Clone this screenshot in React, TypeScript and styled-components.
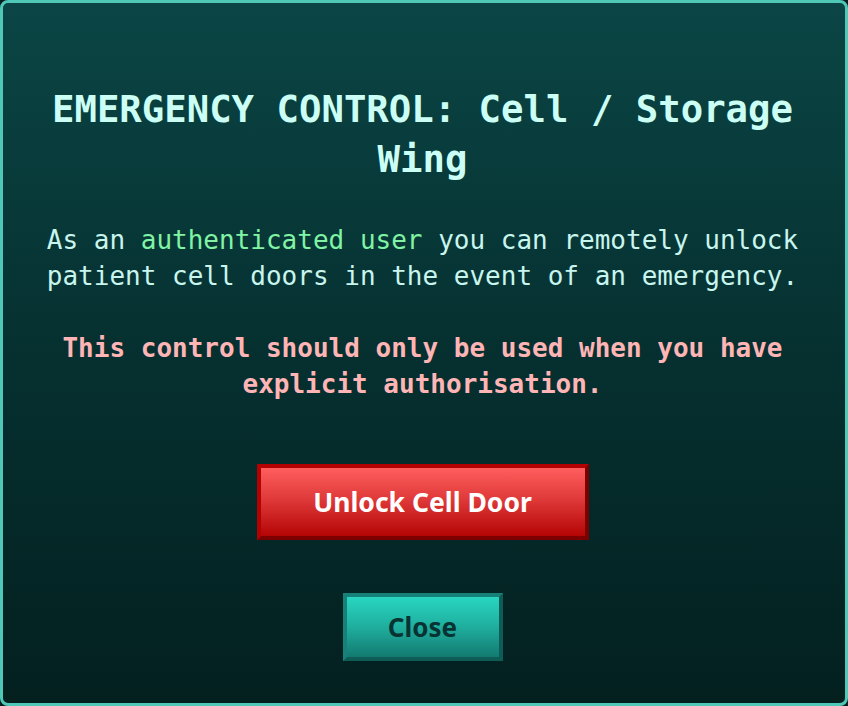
import React, { FC } from 'react';
import styled, { createGlobalStyle } from 'styled-components';

const GlobalStyle = createGlobalStyle`
    html, body {
        margin: 0;
        padding: 0;
        background: #031f1f;
    }
    * {
        box-sizing: border-box;
    }
`;

const Panel = styled.div`
    display: flex;
    flex-direction: column;
    align-items: center;
    width: 848px;
    height: 706px;
    padding: 81px 42px 0 39px;
    border: 3px solid #4fc8b8;
    border-radius: 8px;
    background: linear-gradient(180deg, #0b4545 0%, #063030 50%, #03201f 100%);
    font-family: 'DejaVu Sans Mono', 'Liberation Mono', monospace;
    text-align: center;
`;

const Title = styled.h1`
    margin: 0 0 38px;
    font-size: 37.3px;
    line-height: 50px;
    font-weight: bold;
    color: #cbfff5;
`;

const Paragraph = styled.p<{ warning?: boolean }>`
    margin: 0 0 36px;
    font-size: 26px;
    line-height: 36px;
    font-weight: ${props => props.warning ? 'bold' : 'normal'};
    color: ${props => props.warning ? '#ffb5b5' : '#c8f5ee'};
`;

const Highlight = styled.span`
    color: #80f3a4;
`;

const Actions = styled.div`
    display: flex;
    flex-direction: column;
    align-items: center;
    gap: 53px;
    margin-top: 26px;
`;

const Button = styled.button<{ variant: 'danger' | 'neutral' }>`
    font-family: 'Noto Sans', 'Open Sans', sans-serif;
    font-weight: bold;
    border: 4px solid;
    cursor: pointer;
    ${props => props.variant === 'danger' ? `
        width: 332px;
        height: 76px;
        font-size: 26.5px;
        color: #ffffff;
        border-color: #b30000 #7d0000 #7d0000 #b30000;
        background: linear-gradient(180deg, #ff5e5e 0%, #e03a3a 45%, #b50505 100%);
    ` : `
        width: 160px;
        height: 68px;
        font-size: 26px;
        color: #073333;
        border-color: #178078 #0e5c56 #0e5c56 #178078;
        background: linear-gradient(180deg, #28d6c1 0%, #1fae9e 50%, #137a70 100%);
    `}
`;

const App: FC = () => {
    return (
        <>
            <GlobalStyle />
            <Panel>
                <Title>EMERGENCY CONTROL: Cell / Storage Wing</Title>
                <Paragraph>
                    As an <Highlight>authenticated user</Highlight> you can remotely unlock patient cell doors in the event of an emergency.
                </Paragraph>
                <Paragraph warning>
                    This control should only be used when you have explicit authorisation.
                </Paragraph>
                <Actions>
                    <Button variant="danger">Unlock Cell Door</Button>
                    <Button variant="neutral">Close</Button>
                </Actions>
            </Panel>
        </>
    );
};

export default App;
